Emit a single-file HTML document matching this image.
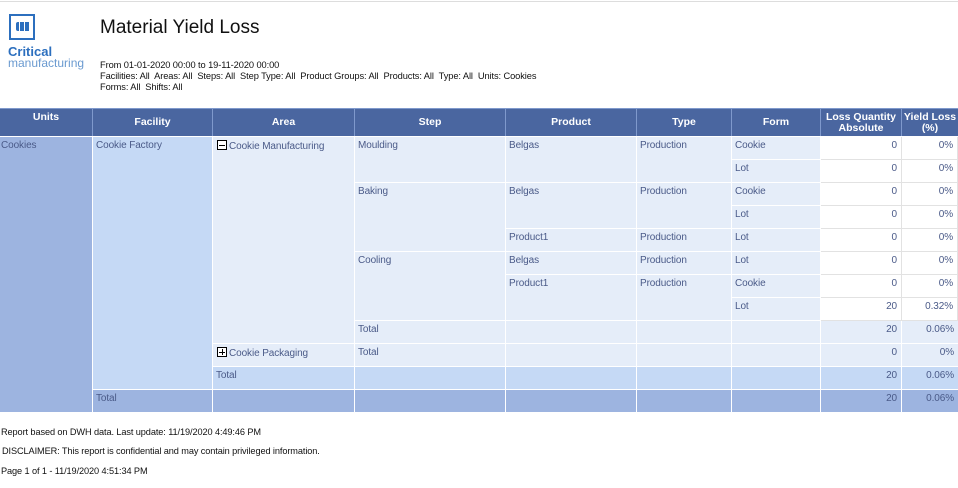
<!DOCTYPE html>
<html><head><meta charset="utf-8"><style>
*{margin:0;padding:0;box-sizing:border-box}
body{width:958px;height:488px;background:#fff;position:relative;overflow:hidden;font-family:"Liberation Sans",sans-serif;}
.a{position:absolute}
.c{position:absolute;font-size:10px;color:#4a5a88;padding:3px 3px;white-space:nowrap;font-family:"Liberation Sans",sans-serif;letter-spacing:-0.1px}
.h{position:absolute;background:#4a66a0;color:#fff;font-weight:bold;font-size:10.5px;text-align:center;font-family:"Liberation Sans",sans-serif;display:flex;align-items:center;justify-content:center;line-height:11px}
.u{background:#9db4e0}.f{background:#c5d9f5}.e{background:#e5edf9}.w{background:#fff;border-bottom:1px solid #e2e2e2;border-right:1px solid #e2e2e2}
.r{text-align:right;padding-right:4px}
.ft{position:absolute;font-size:9.2px;color:#111;font-family:"Liberation Sans",sans-serif;left:1px;letter-spacing:-0.1px}
.box{display:inline-block;width:10px;height:10px;border:1px solid #000;vertical-align:-1px;margin-right:2px;position:relative;background:#fff}
.box:before{content:"";position:absolute;left:1px;top:3.5px;width:6px;height:1px;background:#000}
.plus:after{content:"";position:absolute;left:3.5px;top:1px;width:1px;height:6px;background:#000}
</style></head><body>
<div class="a" style="left:0;top:1px;width:958px;height:1px;background:#ddd"></div>
<!-- logo -->
<div class="a" style="left:9px;top:14px;width:26px;height:26px;border:2px solid #2c6fbe"></div>
<div class="a" style="left:16px;top:22px;width:3px;height:9px;background:#2c6fbe;border-radius:2px 0 0 2px"></div>
<div class="a" style="left:20px;top:22px;width:4px;height:9px;background:#2c6fbe"></div>
<div class="a" style="left:25px;top:22px;width:4px;height:9px;background:#2c6fbe"></div>
<div class="a" style="left:8px;top:44px;font:bold 13px 'Liberation Sans',sans-serif;color:#2c6fbe">Critical</div>
<div class="a" style="left:8px;top:56px;font:12px 'Liberation Sans',sans-serif;color:#6a9ad0">manufacturing</div>
<div class="a" style="left:100px;top:17px;font:19px 'Liberation Sans',sans-serif;color:#111">Material Yield Loss</div>
<div class="a" style="left:100px;top:60px;font:9.3px/11px 'Liberation Sans',sans-serif;color:#111;letter-spacing:-0.1px">From 01-01-2020 00:00 to 19-11-2020 00:00<br>Facilities: All&nbsp; Areas: All&nbsp; Steps: All&nbsp; Step Type: All&nbsp; Product Groups: All&nbsp; Products: All&nbsp; Type: All&nbsp; Units: Cookies<br>Forms: All&nbsp; Shifts: All</div>
<!-- header -->
<div class="a" style="left:0;top:108px;width:958px;height:1px;background:#7f99cc"></div>
<div class="h" style="left:0;top:109px;width:92px;height:27px;align-items:flex-start;padding-top:3px">Units</div>
<div class="h" style="left:93px;top:109px;width:119px;height:27px">Facility</div>
<div class="h" style="left:213px;top:109px;width:141px;height:27px">Area</div>
<div class="h" style="left:355px;top:109px;width:150px;height:27px">Step</div>
<div class="h" style="left:506px;top:109px;width:130px;height:27px">Product</div>
<div class="h" style="left:637px;top:109px;width:94px;height:27px">Type</div>
<div class="h" style="left:732px;top:109px;width:88px;height:27px">Form</div>
<div class="h" style="left:821px;top:109px;width:80px;height:27px">Loss Quantity<br>Absolute</div>
<div class="h" style="left:902px;top:109px;width:56px;height:27px">Yield Loss<br>(%)</div>
<div class="a" style="left:92px;top:109px;width:1px;height:27px;background:#7f99cc"></div>
<div class="a" style="left:212px;top:109px;width:1px;height:27px;background:#7f99cc"></div>
<div class="a" style="left:354px;top:109px;width:1px;height:27px;background:#7f99cc"></div>
<div class="a" style="left:505px;top:109px;width:1px;height:27px;background:#7f99cc"></div>
<div class="a" style="left:636px;top:109px;width:1px;height:27px;background:#7f99cc"></div>
<div class="a" style="left:731px;top:109px;width:1px;height:27px;background:#7f99cc"></div>
<div class="a" style="left:820px;top:109px;width:1px;height:27px;background:#7f99cc"></div>
<div class="a" style="left:901px;top:109px;width:1px;height:27px;background:#7f99cc"></div>
<!-- units / facility -->
<div class="c u" style="left:0;top:137px;width:92px;height:275px;padding-left:1px">Cookies</div>
<div class="c f" style="left:93px;top:137px;width:119px;height:252px">Cookie Factory</div>
<!-- area -->
<div class="c e" style="left:213px;top:137px;width:141px;height:206px;padding-left:4px"><span class="box"></span>Cookie Manufacturing</div>
<div class="c e" style="left:213px;top:344px;width:141px;height:22px;padding-left:4px"><span class="box plus"></span>Cookie Packaging</div>
<!-- step -->
<div class="c e" style="left:355px;top:137px;width:150px;height:45px">Moulding</div>
<div class="c e" style="left:355px;top:183px;width:150px;height:68px">Baking</div>
<div class="c e" style="left:355px;top:252px;width:150px;height:68px">Cooling</div>
<div class="c e" style="left:355px;top:321px;width:150px;height:22px">Total</div>
<div class="c e" style="left:355px;top:344px;width:150px;height:22px">Total</div>
<!-- product -->
<div class="c e" style="left:506px;top:137px;width:130px;height:45px">Belgas</div>
<div class="c e" style="left:506px;top:183px;width:130px;height:45px">Belgas</div>
<div class="c e" style="left:506px;top:229px;width:130px;height:22px">Product1</div>
<div class="c e" style="left:506px;top:252px;width:130px;height:22px">Belgas</div>
<div class="c e" style="left:506px;top:275px;width:130px;height:45px">Product1</div>
<div class="c e" style="left:506px;top:321px;width:130px;height:22px"></div>
<div class="c e" style="left:506px;top:344px;width:130px;height:22px"></div>
<!-- type -->
<div class="c e" style="left:637px;top:137px;width:94px;height:45px">Production</div>
<div class="c e" style="left:637px;top:183px;width:94px;height:45px">Production</div>
<div class="c e" style="left:637px;top:229px;width:94px;height:22px">Production</div>
<div class="c e" style="left:637px;top:252px;width:94px;height:22px">Production</div>
<div class="c e" style="left:637px;top:275px;width:94px;height:45px">Production</div>
<div class="c e" style="left:637px;top:321px;width:94px;height:22px"></div>
<div class="c e" style="left:637px;top:344px;width:94px;height:22px"></div>
<!-- form -->
<div class="c e" style="left:732px;top:137px;width:88px;height:22px">Cookie</div>
<div class="c e" style="left:732px;top:160px;width:88px;height:22px">Lot</div>
<div class="c e" style="left:732px;top:183px;width:88px;height:22px">Cookie</div>
<div class="c e" style="left:732px;top:206px;width:88px;height:22px">Lot</div>
<div class="c e" style="left:732px;top:229px;width:88px;height:22px">Lot</div>
<div class="c e" style="left:732px;top:252px;width:88px;height:22px">Lot</div>
<div class="c e" style="left:732px;top:275px;width:88px;height:22px">Cookie</div>
<div class="c e" style="left:732px;top:298px;width:88px;height:22px">Lot</div>
<div class="c e" style="left:732px;top:321px;width:88px;height:22px"></div>
<div class="c e" style="left:732px;top:344px;width:88px;height:22px"></div>
<!-- numbers -->
<div class="c w r" style="left:821px;top:137px;width:81px;height:23px">0</div><div class="c w r" style="left:902px;top:137px;width:56px;height:23px">0%</div>
<div class="c w r" style="left:821px;top:160px;width:81px;height:23px">0</div><div class="c w r" style="left:902px;top:160px;width:56px;height:23px">0%</div>
<div class="c w r" style="left:821px;top:183px;width:81px;height:23px">0</div><div class="c w r" style="left:902px;top:183px;width:56px;height:23px">0%</div>
<div class="c w r" style="left:821px;top:206px;width:81px;height:23px">0</div><div class="c w r" style="left:902px;top:206px;width:56px;height:23px">0%</div>
<div class="c w r" style="left:821px;top:229px;width:81px;height:23px">0</div><div class="c w r" style="left:902px;top:229px;width:56px;height:23px">0%</div>
<div class="c w r" style="left:821px;top:252px;width:81px;height:23px">0</div><div class="c w r" style="left:902px;top:252px;width:56px;height:23px">0%</div>
<div class="c w r" style="left:821px;top:275px;width:81px;height:23px">0</div><div class="c w r" style="left:902px;top:275px;width:56px;height:23px">0%</div>
<div class="c w r" style="left:821px;top:298px;width:81px;height:23px">20</div><div class="c w r" style="left:902px;top:298px;width:56px;height:23px">0.32%</div>
<div class="c e r" style="left:821px;top:321px;width:80px;height:22px">20</div><div class="c e r" style="left:902px;top:321px;width:56px;height:22px">0.06%</div>
<div class="c e r" style="left:821px;top:344px;width:80px;height:22px">0</div><div class="c e r" style="left:902px;top:344px;width:56px;height:22px">0%</div>
<!-- area total row -->
<div class="c f" style="left:213px;top:367px;width:141px;height:22px">Total</div>
<div class="c f" style="left:355px;top:367px;width:150px;height:22px"></div>
<div class="c f" style="left:506px;top:367px;width:130px;height:22px"></div>
<div class="c f" style="left:637px;top:367px;width:94px;height:22px"></div>
<div class="c f" style="left:732px;top:367px;width:88px;height:22px"></div>
<div class="c f r" style="left:821px;top:367px;width:80px;height:22px">20</div>
<div class="c f r" style="left:902px;top:367px;width:56px;height:22px">0.06%</div>
<!-- facility total row -->
<div class="c u" style="left:93px;top:390px;width:119px;height:22px">Total</div>
<div class="c u" style="left:213px;top:390px;width:141px;height:22px"></div>
<div class="c u" style="left:355px;top:390px;width:150px;height:22px"></div>
<div class="c u" style="left:506px;top:390px;width:130px;height:22px"></div>
<div class="c u" style="left:637px;top:390px;width:94px;height:22px"></div>
<div class="c u" style="left:732px;top:390px;width:88px;height:22px"></div>
<div class="c u r" style="left:821px;top:390px;width:80px;height:22px">20</div>
<div class="c u r" style="left:902px;top:390px;width:56px;height:22px">0.06%</div>
<!-- footer -->
<div class="ft" style="top:427px">Report based on DWH data. Last update: 11/19/2020 4:49:46 PM</div>
<div class="ft" style="top:446px;left:2px">DISCLAIMER: This report is confidential and may contain privileged information.</div>
<div class="ft" style="top:466px">Page 1 of 1 - 11/19/2020 4:51:34 PM</div>
</body></html>
